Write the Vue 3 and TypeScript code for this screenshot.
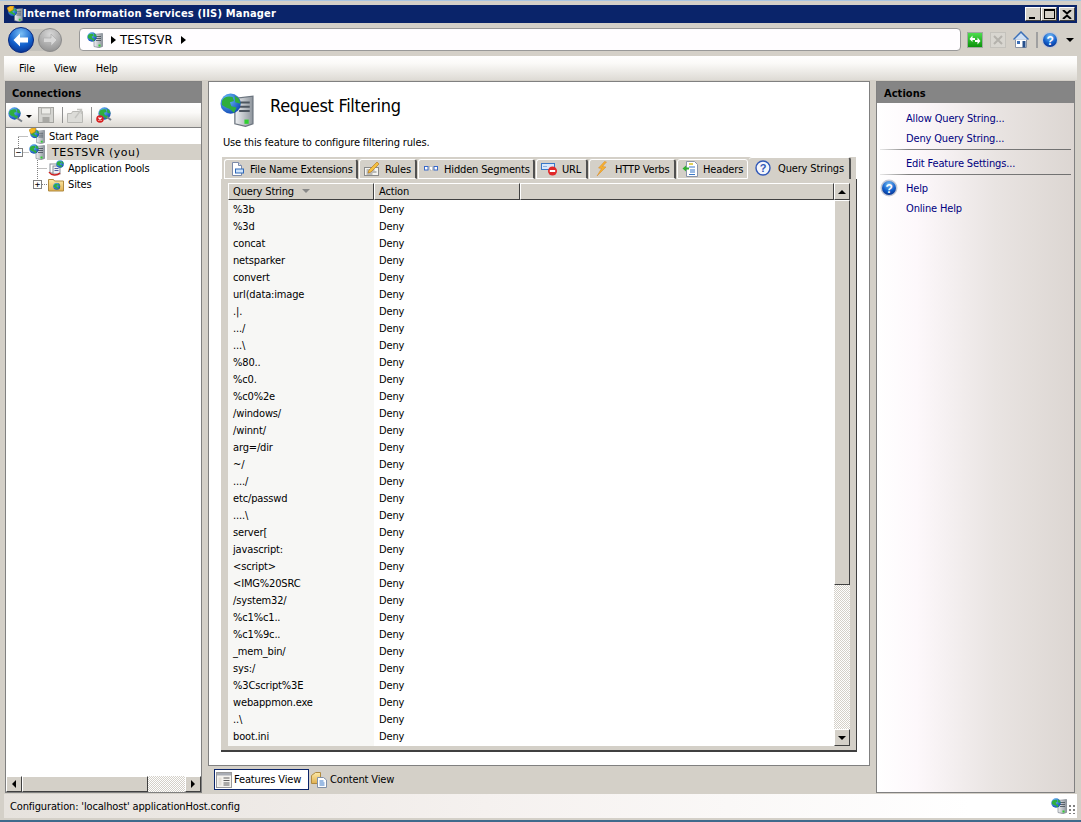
<template>
  <div class="win">
    <svg class="defs" width="0" height="0" aria-hidden="true">
      <defs>
        <linearGradient id="gs" x1="0" y1="0" x2="1" y2="0"><stop offset="0" stop-color="#f0f2f4" /><stop offset="1" stop-color="#8d949c" /></linearGradient>
        <radialGradient id="gb" cx="0.35" cy="0.3" r="0.8"><stop offset="0" stop-color="#6fc4ff" /><stop offset="1" stop-color="#0a3fb0" /></radialGradient>
        <radialGradient id="gback" cx="0.5" cy="0.25" r="0.85"><stop offset="0" stop-color="#7cc0f5" /><stop offset="0.55" stop-color="#1260cc" /><stop offset="1" stop-color="#06247c" /></radialGradient>
        <radialGradient id="gfwd" cx="0.5" cy="0.25" r="0.85"><stop offset="0" stop-color="#d8d8d8" /><stop offset="1" stop-color="#8a8a8a" /></radialGradient>
        <linearGradient id="gfold" x1="0" y1="0" x2="0" y2="1"><stop offset="0" stop-color="#fdeaa8" /><stop offset="1" stop-color="#e0b050" /></linearGradient>
        <linearGradient id="ggreen" x1="0" y1="0" x2="0" y2="1"><stop offset="0" stop-color="#50e050" /><stop offset="1" stop-color="#089008" /></linearGradient>
        <symbol id="globe" viewBox="0 0 16 16">
          <circle cx="8" cy="8" r="7.6" fill="url(#gb)" />
          <path d="M1.500 6c1-3 5-4 8-3l1 3-3 1 1 3 4 1-2 4-3-3-3-1-3-2z" fill="#2fae3e" />
          <path d="M11 2l3 2 1.500 4-4-1z" fill="#2fae3e" />
        </symbol>
        <symbol id="srv" viewBox="0 0 16 16">
          <path d="M7 2.500l8.500-1v13l-3.500 1.200-5-1.200z" fill="url(#gs)" stroke="#6d7680" stroke-width=".6" />
          <path d="M9 4.500h5M9 6.500h5M9 8.500h5" stroke="#4d5660" stroke-width=".9" />
          <rect x="11.500" y="12.500" width="2" height="2" fill="#30d030" />
          <use href="#globe" x="0" y="0" width="10" height="10" />
        </symbol>
        <symbol id="start" viewBox="0 0 16 16">
          <use href="#srv" x="1" y="1" width="15" height="15" />
          <path d="M0 2l3-2h4l-1 4-4 2z" fill="#f5b820" stroke="#b07808" stroke-width=".5" />
        </symbol>
        <symbol id="pools" viewBox="0 0 16 16">
          <rect x="2" y="4" width="7" height="9" fill="#fff" stroke="#8a8f98" />
          <rect x="5" y="6" width="7" height="8" fill="#f0f0f4" stroke="#8a8f98" />
          <path d="M6.500 8.500h4M6.500 10.500h4" stroke="#5060a0" />
          <path d="M1 12c2 3.500 8 4 11 1" fill="none" stroke="#d02020" stroke-width="1.400" />
          <use href="#globe" x="8" y="0" width="8" height="8" />
        </symbol>
        <symbol id="sites" viewBox="0 0 16 16">
          <path d="M.5 3.500h5l1 1.500h9v10h-15z" fill="url(#gfold)" stroke="#b08a40" />
          <use href="#globe" x="5" y="6.500" width="7.500" height="7.500" />
        </symbol>
        <symbol id="doc" viewBox="0 0 16 16">
          <path d="M3.500 1.500h6l3 3v10h-9z" fill="#fff" stroke="#7c8aa8" />
          <path d="M9.500 1.500v3h3" fill="#dde4f0" stroke="#7c8aa8" />
          <rect x="6.500" y="8" width="8" height="4" fill="#cfe4fb" stroke="#2f68b8" />
        </symbol>
        <symbol id="rules" viewBox="0 0 16 16">
          <rect x=".5" y="6.500" width="14" height="8" fill="#f4f4f0" stroke="#8a8a8a" />
          <path d="M2.500 9h8M2.500 11h10M2.500 13h6" stroke="#808080" />
          <path d="M5 9l8-8 2 2-8 8-3 1z" fill="#f5c040" stroke="#b07010" stroke-width=".6" />
        </symbol>
        <symbol id="seg" viewBox="0 0 16 16">
          <rect x="1.500" y="5.500" width="3.500" height="3.500" fill="#fff" stroke="#3868c8" />
          <rect x="6.500" y="5.500" width="3" height="3.500" fill="#fff" stroke="#a8a8a8" stroke-dasharray="1 1" />
          <rect x="11" y="5.500" width="3.500" height="3.500" fill="#fff" stroke="#3868c8" />
        </symbol>
        <symbol id="url" viewBox="0 0 16 16">
          <rect x=".5" y="2.500" width="13" height="6" fill="#d8e8fb" stroke="#3878c8" />
          <path d="M2.500 5.500h4" stroke="#3878c8" stroke-dasharray="1 1" />
          <circle cx="11.500" cy="10" r="4.500" fill="#e02828" />
          <rect x="8.800" y="9" width="5.400" height="2" fill="#fff" />
        </symbol>
        <symbol id="bolt" viewBox="0 0 16 16">
          <path d="M10.500.5L4.500 7l3 .5L3 15l9-9-3.500-.5L12.500 1z" fill="#f5b030" stroke="#d88828" stroke-width=".5" />
        </symbol>
        <symbol id="headers" viewBox="0 0 16 16">
          <path d="M4.500.5h8l3 3v12h-11z" fill="#fff" stroke="#8a94a8" />
          <path d="M7 3h4" stroke="#d8c020" stroke-width="1.500" />
          <path d="M7 6h6M8 9h5M8 11h5M7 13.500h6" stroke="#3878c8" />
          <path d="M.5 7.500l3.500-3v2h3v2H4v2z" fill="#30b030" />
        </symbol>
        <symbol id="qhelp" viewBox="0 0 16 16">
          <circle cx="8" cy="8" r="7" fill="#f4f6fc" stroke="#3058b8" stroke-width="1.400" />
          <text x="8" y="12" text-anchor="middle" font-size="11" font-weight="700" font-family="Liberation Sans, sans-serif" fill="#3058b8">?</text>
        </symbol>
        <symbol id="help" viewBox="0 0 18 18">
          <circle cx="9" cy="9" r="8.500" fill="#c4c8d4" />
          <circle cx="9" cy="9" r="7" fill="url(#gback)" />
          <text x="9" y="13.500" text-anchor="middle" font-size="12" font-weight="700" font-family="Liberation Sans, sans-serif" fill="#fff">?</text>
        </symbol>
        <symbol id="features" viewBox="0 0 16 16">
          <rect x=".5" y=".5" width="15" height="15" fill="#f4f2ee" stroke="#9a9a9a" />
          <rect x="1" y="1" width="14" height="2.500" fill="#a8acb4" />
          <path d="M2.500 5.500h3v8h-3z" fill="#e4e0d8" />
          <path d="M7.500 6h6M7.500 8.500h6M7.500 11h6M7.500 13h6" stroke="#606060" />
        </symbol>
        <symbol id="content" viewBox="0 0 16 16">
          <path d="M.5 3.500l4-3h5v11h-9z" fill="url(#gfold)" stroke="#b08a40" />
          <path d="M6.500 5.500h6l3 2.500v7.500h-9z" fill="#fff" stroke="#8090a8" />
          <path d="M8.500 9h4M8.500 11h5M8.500 13h5" stroke="#3878c8" />
        </symbol>
      </defs>
    </svg>

    <div class="title">
      <svg class="ic16" viewBox="0 0 16 16"><use href="#start" /></svg>
      <span class="title-text">Internet Information Services (IIS) Manager</span>
      <div class="wbtns">
        <button class="wbtn"><span class="w-min"></span></button>
        <button class="wbtn"><span class="w-max"></span></button>
        <button class="wbtn close">
          <svg width="10" height="9" viewBox="0 0 10 9"><path d="M1 0l4 3.500L9 0M1 9l4-3.500L9 9" fill="none" stroke="#000" stroke-width="2" /></svg>
        </button>
      </div>
    </div>

    <div class="nav">
      <div class="history">
        <svg class="back" width="26" height="26" viewBox="0 0 26 26">
          <circle cx="13" cy="13" r="12.500" fill="url(#gback)" stroke="#0a2a80" />
          <path d="M5.500 13l6.500-6.500v4h8v5h-8v4z" fill="#fff" />
        </svg>
        <svg class="fwd" width="24" height="24" viewBox="0 0 24 24">
          <circle cx="12" cy="12" r="11.500" fill="url(#gfwd)" stroke="#8c8c8c" />
          <path d="M19 12l-6-6v4H5.500v4.500H13v3.500z" fill="#d8d8d8" stroke="#a8a8a8" stroke-width=".6" />
        </svg>
      </div>
      <div class="addr">
        <svg class="ic16" viewBox="0 0 16 16"><use href="#srv" /></svg>
        <span class="tri"></span>
        <span class="addr-text">TESTSVR</span>
        <span class="tri"></span>
      </div>
      <div class="navtools">
        <svg width="16" height="16" viewBox="0 0 16 16">
          <rect x=".5" y=".5" width="15" height="15" fill="url(#ggreen)" stroke="#a0a8a0" />
          <path d="M2.500 7l3-3.500V6H8v2H5.500v2zM13.500 9l-3 3.500V10H8V8h2.500V5.500z" fill="#fff" />
        </svg>
        <svg width="16" height="16" viewBox="0 0 16 16">
          <rect x=".5" y=".5" width="15" height="15" fill="#d8d6d0" stroke="#c4c2bc" />
          <path d="M4 4l8 8M12 4l-8 8" stroke="#b4b2ac" stroke-width="2" />
        </svg>
        <svg width="16" height="17" viewBox="0 0 16 17">
          <path d="M2.500 8v8.500h11V8z" fill="#fff" stroke="#8a94a4" />
          <path d="M.5 8.500L8 1l7.500 7.500" fill="#cfe0f4" stroke="#3c70b8" stroke-width="1.500" />
          <rect x="9.500" y="10" width="3" height="6.500" fill="#27508c" />
          <rect x="4" y="10" width="3" height="3" fill="#3c70b8" />
        </svg>
        <span class="vsep"></span>
        <svg width="18" height="18" viewBox="0 0 18 18"><use href="#help" /></svg>
        <span class="drop"></span>
      </div>
    </div>

    <div class="menu">
      <span v-for="m in menus" :key="m">{{ m }}</span>
    </div>

    <div class="main">
      <section class="side left">
        <h2 class="phead">Connections</h2>
        <div class="ltools">
          <svg width="16" height="16" viewBox="0 0 16 16">
            <use href="#globe" width="13" height="13" />
            <path d="M9 11l5 3.500" stroke="#7a8088" stroke-width="2" />
          </svg>
          <span class="drop small"></span>
          <svg width="16" height="16" viewBox="0 0 16 16" class="save">
            <rect x=".5" y=".5" width="15" height="15" fill="#d4d4d0" stroke="#a4a4a0" />
            <rect x="3.500" y="1" width="9" height="6" fill="#ecece8" stroke="#b4b4b0" />
            <rect x="4.500" y="10" width="7" height="5.500" fill="#a8a8a4" />
          </svg>
          <span class="tsep"></span>
          <svg width="16" height="16" viewBox="0 0 16 16">
            <path d="M.5 6.500h4l1-2h10v11H.5z" fill="#dcdcd8" stroke="#b8b8b4" />
            <path d="M8 11l6-8M10 2.500h4.500V7" fill="none" stroke="#c4c4c0" stroke-width="1.400" />
          </svg>
          <span class="tsep"></span>
          <svg width="16" height="16" viewBox="0 0 16 16">
            <use href="#globe" x="2" y="0" width="13" height="13" />
            <path d="M11 10l4 3" stroke="#7a8088" stroke-width="2" />
            <circle cx="4" cy="12" r="3.800" fill="#d82020" />
            <path d="M2.500 10.500l3 3M5.500 10.500l-3 3" stroke="#fff" stroke-width="1.200" />
          </svg>
        </div>
        <div class="tree">
          <svg class="lines" width="60" height="64" viewBox="0 0 60 64">
            <path d="M12.500 8.500h10M12.500 9v12M17.500 24.500h6M31.500 32v24M31.500 40.500h10M36 56.500h6" fill="none" stroke="#808080" stroke-dasharray="1 1" />
          </svg>
          <div v-for="n in nodes" :key="n.label" class="node" :class="'lv' + n.level">
            <span v-if="n.toggle" class="toggle">{{ n.toggle }}</span>
            <svg class="ic16" viewBox="0 0 16 16"><use :href="'#' + n.icon" /></svg>
            <span class="label" :class="{ sel: n.sel }">{{ n.label }}</span>
          </div>
        </div>
        <div class="hscroll">
          <button class="sbtn"><span class="a-left"></span></button>
          <div class="hthumb"></div>
          <div class="dither"></div>
          <button class="sbtn"><span class="a-right"></span></button>
        </div>
      </section>

      <div class="center">
        <section class="panel">
          <div class="phd">
            <svg width="34" height="34" viewBox="0 0 16 16"><use href="#srv" /></svg>
            <h1>Request Filtering</h1>
          </div>
          <p class="desc">Use this feature to configure filtering rules.</p>
          <div class="tabs">
            <div v-for="t in tabs" :key="t.label" class="tab" :class="{ active: t.active }">
              <svg class="ic16" viewBox="0 0 16 16"><use :href="'#' + t.icon" /></svg>
              <span>{{ t.label }}</span>
            </div>
          </div>
          <div class="page">
            <div class="grid">
              <div class="gmain">
                <div class="ghead">
                  <div class="hc c1">Query String <span class="sort"></span></div>
                  <div class="hc c2">Action</div>
                  <div class="hc rest"></div>
                </div>
                <div class="gbody">
                  <div v-for="r in rules" :key="r" class="row">
                    <div class="cell c1">{{ r }}</div>
                    <div class="cell">Deny</div>
                  </div>
                </div>
              </div>
              <div class="vscroll">
                <button class="sbtn tall"><span class="a-up"></span></button>
                <div class="vthumb"></div>
                <div class="dither"></div>
                <button class="sbtn tall"><span class="a-down"></span></button>
              </div>
            </div>
          </div>
        </section>
        <div class="views">
          <div class="view on">
            <svg class="ic16" viewBox="0 0 16 16"><use href="#features" /></svg>
            <span>Features View</span>
          </div>
          <div class="view">
            <svg class="ic16" viewBox="0 0 16 16"><use href="#content" /></svg>
            <span>Content View</span>
          </div>
        </div>
      </div>

      <section class="side right">
        <h2 class="phead">Actions</h2>
        <div class="acts">
          <a class="act">Allow Query String...</a>
          <a class="act">Deny Query String...</a>
          <hr />
          <a class="act">Edit Feature Settings...</a>
          <hr />
          <a class="act help">
            <svg width="18" height="18" viewBox="0 0 18 18"><use href="#help" /></svg>
            <span>Help</span>
          </a>
          <a class="act">Online Help</a>
        </div>
      </section>
    </div>

    <div class="status">
      <span>Configuration: 'localhost' applicationHost.config</span>
      <svg class="ic16" viewBox="0 0 16 16"><use href="#srv" /></svg>
      <span class="grip"></span>
    </div>
  </div>
</template>

<script setup lang="ts">
interface TreeNode {
  label: string
  icon: string
  level: number
  toggle?: string
  sel?: boolean
}

const menus = ['File', 'View', 'Help']

const nodes: TreeNode[] = [
  { label: 'Start Page', icon: 'start', level: 0 },
  { label: 'TESTSVR (you)', icon: 'srv', level: 0, toggle: '−', sel: true },
  { label: 'Application Pools', icon: 'pools', level: 1 },
  { label: 'Sites', icon: 'sites', level: 1, toggle: '+' },
]

const tabs = [
  { label: 'File Name Extensions', icon: 'doc' },
  { label: 'Rules', icon: 'rules' },
  { label: 'Hidden Segments', icon: 'seg' },
  { label: 'URL', icon: 'url' },
  { label: 'HTTP Verbs', icon: 'bolt' },
  { label: 'Headers', icon: 'headers' },
  { label: 'Query Strings', icon: 'qhelp', active: true },
]

const rules = [
  '%3b', '%3d', 'concat', 'netsparker', 'convert', 'url(data:image', '.|.', '.../', '...\\',
  '%80..', '%c0.', '%c0%2e', '/windows/', '/winnt/', 'arg=/dir', '~/', '..../', 'etc/passwd',
  '....\\', 'server[', 'javascript:', '<script>', '<IMG%20SRC', '/system32/', '%c1%c1..',
  '%c1%9c..', '_mem_bin/', 'sys:/', '%3Cscript%3E', 'webappmon.exe', '..\\', 'boot.ini',
]
</script>

<style>
html, body {
  margin: 0;
  background: #d4d0c8;
  overflow: hidden;
}
</style>

<style scoped>
.win {
  width: 1081px;
  height: 822px;
  box-sizing: border-box;
  padding: 4px 4px 2px;
  border-top: 1px solid #a8c4e0;
  border-bottom: 2px solid #3f6a8c;
  display: flex;
  flex-direction: column;
  background: #d4d0c8;
  font: 11px/16px "DejaVu Sans Condensed", "DejaVu Sans", sans-serif;
  font-stretch: condensed;
  letter-spacing: -.15px;
  color: #000;
  position: relative;
  white-space: nowrap;
}
.defs { position: absolute; }
.ic16 { width: 16px; height: 16px; flex: none; display: block; }

.title {
  height: 18px;
  background: #0a246a;
  display: flex;
  align-items: center;
  padding-left: 3px;
  color: #fff;
  font-weight: 700;
  font-size: 11px;
  letter-spacing: .2px;
}
.wbtns { margin-left: auto; display: flex; margin-right: 2px; }
.wbtn {
  width: 16px;
  height: 14px;
  padding: 0;
  background: #d4d0c8;
  border: 1px solid;
  border-color: #fff #404040 #404040 #fff;
  display: flex;
  align-items: center;
  justify-content: center;
  position: relative;
}
.wbtn.close { margin-left: 2px; }
.w-min { width: 6px; height: 2px; background: #000; margin-top: 7px; margin-right: 2px; }
.w-max { width: 9px; height: 7px; border: 1px solid #000; border-top-width: 2px; }

.nav {
  height: 33px;
  display: flex;
  align-items: center;
}
.history {
  width: 52px;
  height: 22px;
  margin-left: 5px;
  border-radius: 11px;
  background: #c4c2bc;
  display: flex;
  align-items: center;
  justify-content: space-between;
}
.back { margin-left: -1px; flex: none; }
.fwd { margin-right: -1px; flex: none; }
.addr {
  width: 882px;
  height: 23px;
  box-sizing: border-box;
  margin-left: 18px;
  background: #fffdff;
  border: 1px solid #999;
  border-radius: 4px;
  display: flex;
  align-items: center;
  padding-left: 7px;
  font-size: 13px;
  letter-spacing: 0;
}
.addr-text { margin: 0 5px 0 4px; }
.tri {
  width: 0;
  height: 0;
  margin-left: 8px;
  border-left: 5px solid #000;
  border-top: 4px solid transparent;
  border-bottom: 4px solid transparent;
}
.addr-text + .tri { margin-left: 3px; }
.navtools {
  display: flex;
  align-items: center;
  margin-left: 6px;
  gap: 7px;
}
.vsep { width: 2px; height: 16px; background: #a0a0a0; margin-right: -4px; }
.drop {
  width: 0;
  height: 0;
  border-top: 4px solid #000;
  border-left: 4px solid transparent;
  border-right: 4px solid transparent;
}
.drop.small { margin: 3px 0 0 2px; border-width: 3px 3px 0; }

.menu {
  height: 24px;
  background: linear-gradient(#fff, #fbfaf8 30%, #dedbd5);
  display: flex;
  align-items: center;
  box-sizing: border-box;
  padding: 2px 0 0 15px;
  gap: 19px;
}

.main {
  flex: 1;
  min-height: 0;
  display: flex;
  margin: 1px 0 1px 1px;
}
.side {
  border: 1px solid #808080;
  box-sizing: border-box;
  display: flex;
  flex-direction: column;
}
.left { width: 197px; background: #fff; }
.right { width: 199px; margin-left: 6px; background: linear-gradient(90deg, #fff 0, #fdf8fb 20%, #e9e4e2 60%, #dcd6d2 100%); }
.right .phead { padding-left: 7px; }
.phead {
  margin: 0;
  height: 21px;
  background: #858585;
  font-size: 11px;
  font-weight: 700;
  letter-spacing: .05px;
  line-height: 23px;
  padding-left: 6px;
}
.ltools {
  height: 25px;
  box-sizing: border-box;
  background: linear-gradient(#fff, #fbfaf8 40%, #dcd9d3);
  border-bottom: 1px solid #808080;
  display: flex;
  align-items: center;
  padding-left: 2px;
}
.ltools svg { flex: none; }
.save { margin-left: 6px; }
.tsep { width: 1px; height: 16px; background: #909090; margin: 0 4px 0 8px; }
.tree {
  flex: 1;
  position: relative;
}
.lines { position: absolute; left: 0; top: 0; }
.node {
  height: 16px;
  display: flex;
  align-items: center;
  position: relative;
}
.lv0 { padding-left: 23px; }
.lv1 { padding-left: 42px; }
.label {
  height: 16px;
  box-sizing: border-box;
  margin-left: 2px;
  padding: 1px 2px 0;
  line-height: 16px;
}
.label.sel {
  flex: 1;
  background: #d4d0c8;
  padding-left: 5px;
  font-family: "DejaVu Sans", sans-serif;
  font-stretch: normal;
  letter-spacing: .5px;
}
.toggle {
  position: absolute;
  width: 9px;
  height: 9px;
  box-sizing: border-box;
  border: 1px solid #808080;
  background: #fff;
  font: 9px/7px "DejaVu Sans Mono", monospace;
  text-align: center;
  top: 4px;
}
.lv0 .toggle { left: 8px; }
.lv1 .toggle { left: 27px; }
.hscroll {
  height: 16px;
  display: flex;
}
.sbtn {
  width: 16px;
  height: 16px;
  flex: none;
  padding: 0;
  box-sizing: border-box;
  background: #d4d0c8;
  border: 1px solid;
  border-color: #fff #404040 #404040 #fff;
  display: flex;
  align-items: center;
  justify-content: center;
}
.hthumb {
  width: 126px;
  box-sizing: border-box;
  background: #d4d0c8;
  border: 1px solid;
  border-color: #fff #404040 #404040 #fff;
}
.dither {
  flex: 1;
  background: repeating-conic-gradient(#d4d0c8 0 25%, #fff 0 50%) 0 0 / 2px 2px;
}
.a-left, .a-right, .a-up, .a-down { width: 0; height: 0; display: block; border: 4px solid transparent; }
.a-left { border-right-color: #000; border-left-width: 0; }
.a-right { border-left-color: #000; border-right-width: 0; }
.a-up { border-bottom-color: #000; border-top-width: 0; }
.a-down { border-top-color: #000; border-bottom-width: 0; }

.center {
  width: 662px;
  margin-left: 6px;
  display: flex;
  flex-direction: column;
}
.panel {
  height: 685px;
  box-sizing: border-box;
  background: #fff;
  border: 1px solid #808080;
  padding: 11px 0 0 12px;
}
.phd {
  height: 34px;
  display: flex;
  align-items: center;
}
.phd svg { margin-left: -1px; flex: none; }
h1 {
  margin: 0 0 8px 16px;
  font-size: 18px;
  line-height: 24px;
  font-weight: 400;
  letter-spacing: -.3px;
}
.desc {
  margin: 8px 0 0 2px;
  height: 16px;
}
.tabs {
  margin-top: 6px;
  height: 22px;
  width: 634px;
  background: #d4d0c8;
  display: grid;
  grid-template-columns: 134px 58px 117px 52px 87px 71px 102px;
  column-gap: 1px;
  padding-left: 2px;
  box-sizing: border-box;
  margin-left: 1px;
}
.tab {
  height: 20px;
  margin-top: 2px;
  box-sizing: border-box;
  display: flex;
  align-items: center;
  padding-left: 4px;
  gap: 5px;
  border-top: 1px solid #fff;
  border-left: 1px solid #fff;
  border-right: 2px solid #505050;
  border-bottom: 1px solid #fff;
  border-radius: 3px 3px 0 0;
  background: #d4d0c8;
}
.tab span { padding-top: 2px; }
.tab:nth-child(6) { border-right: 1px solid #fff; }
.tab.active {
  height: 22px;
  margin-top: 0;
  border-bottom: 0;
  border-left: 0;
  padding-left: 6px;
  gap: 7px;
  padding-bottom: 2px;
}
.page {
  width: 636px;
  height: 573px;
  box-sizing: border-box;
  background: #d4d0c8;
  padding: 4px 6px 5px 7px;
  border-right: 1px solid #404040;
  border-bottom: 2px solid #404040;
}
.grid {
  height: 563px;
  display: flex;
}
.gmain {
  flex: 1;
  min-width: 0;
  display: flex;
  flex-direction: column;
}
.ghead {
  height: 17px;
  display: flex;
  flex: none;
}
.hc {
  box-sizing: border-box;
  background: #d4d0c8;
  border: 1px solid;
  border-color: #fff #404040 #404040 #fff;
  padding-left: 4px;
  line-height: 16px;
  display: flex;
  align-items: flex-start;
  white-space: pre;
}
.hc.c1 { width: 146px; }
.hc.c2 { width: 146px; }
.hc.rest { flex: 1; }
.sort {
  width: 0;
  height: 0;
  margin: 5px 0 0 5px;
  border-top: 4px solid #888;
  border-left: 4px solid transparent;
  border-right: 4px solid transparent;
}
.gbody {
  flex: 1;
  background: linear-gradient(90deg, #f7f7f5 146px, #fff 146px);
}
.row {
  height: 17px;
  display: flex;
}
.cell {
  padding-left: 5px;
  line-height: 19px;
  height: 17px;
}
.cell.c1 { width: 141px; }
.vscroll {
  width: 16px;
  flex: none;
  display: flex;
  flex-direction: column;
}
.sbtn.tall { height: 17px; }
.vthumb {
  height: 385px;
  box-sizing: border-box;
  background: #d4d0c8;
  border: 1px solid;
  border-color: #fff #404040 #404040 #fff;
}
.views {
  flex: 1;
  display: flex;
  align-items: center;
  padding-left: 6px;
}
.view {
  height: 21px;
  box-sizing: border-box;
  display: flex;
  align-items: center;
  gap: 3px;
  padding: 0 4px 0 1px;
  border: 1px solid transparent;
}
.view.on {
  width: 95px;
  background: #fff;
  border-color: #0a246a;
  gap: 2px;
}
.acts {
  display: flex;
  flex-direction: column;
  padding: 5px 3px 0 3px;
}
.act {
  color: #000080;
  height: 20px;
  line-height: 22px;
  padding-left: 26px;
}
hr {
  width: 100%;
  box-sizing: border-box;
  height: 1px;
  margin: 1px 0 3px;
  border: 0;
  background: linear-gradient(90deg, #e8e8e8, #808080 15%, #707070);
}
.act.help {
  padding-left: 0;
  display: flex;
  align-items: center;
  gap: 8px;
}
.act.help span { padding-top: 2px; line-height: 18px; }
.status {
  height: 24px;
  box-sizing: border-box;
  display: flex;
  align-items: center;
  padding-left: 6px;
  padding-right: 1px;
  background: linear-gradient(90deg, #e6e2dd, #f5f1ef 45%, #fff 90%);
}
.status span:first-child { margin-right: auto; padding-top: 2px; }
.grip {
  width: 8px;
  height: 10px;
  margin: 6px 0 0 1px;
  background: radial-gradient(circle, #808080 1px, transparent 1.2px) 0 0 / 4px 4px;
}
</style>
